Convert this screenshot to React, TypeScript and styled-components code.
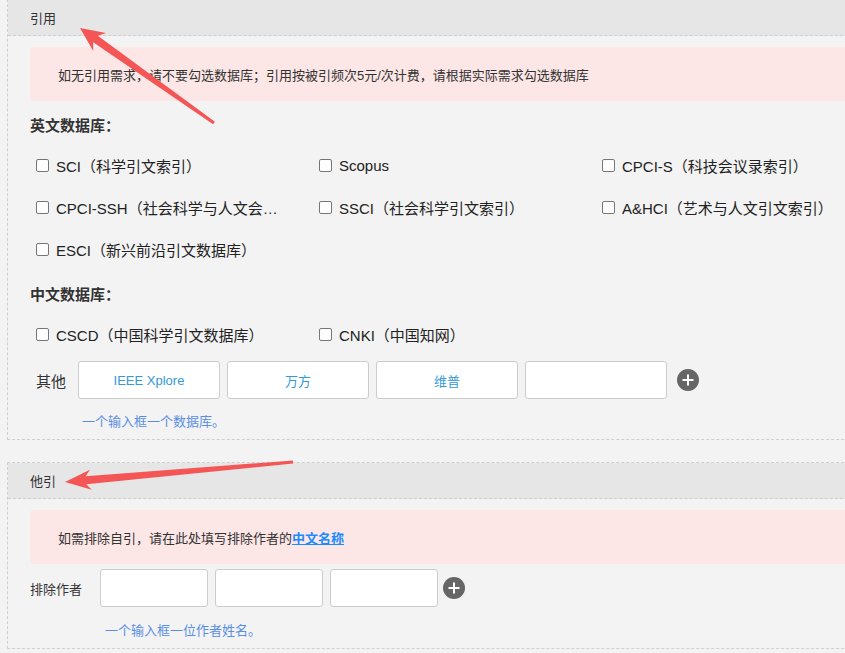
import React from 'react';
import { createGlobalStyle, styled } from 'styled-components';

const GlobalStyle = createGlobalStyle`
  html, body {
    margin: 0;
    padding: 0;
    background: #f3f3f3;
    overflow: hidden;
  }
  body {
    font-family: "Liberation Sans", "Noto Sans CJK SC", sans-serif;
    color: #333;
  }
`;

const Page = styled.div`
  position: relative;
  width: 845px;
  height: 653px;
  overflow: hidden;
`;

const Section = styled.section<{ $first?: boolean }>`
  margin: ${({ $first }) => ($first ? '-1px' : '22px')} 0 0 7px;
  width: 900px;
  border: 1px dashed #cfcfcf;
`;

const Header = styled.div`
  height: 36px;
  box-sizing: border-box;
  padding: 3px 0 0 22px;
  line-height: 32px;
  font-size: 13px;
  color: #333;
  background: #e6e6e6;
  border-bottom: 1px dashed #cfcfcf;
`;

const Body = styled.div`
  padding: 11px 0 8px 22px;
`;

const Notice = styled.div`
  display: flex;
  align-items: center;
  height: 54px;
  width: 860px;
  box-sizing: border-box;
  padding-left: 28px;
  border-radius: 4px;
  background: #fce6e6;
  font-size: 13px;
  color: #333;
`;

const NoticeLink = styled.a`
  color: #1a8cff;
  font-weight: bold;
  text-decoration: underline;
`;

const GroupTitle = styled.div`
  margin: 15px 0 8px;
  line-height: 20px;
  font-size: 15px;
  font-weight: bold;
  color: #333;
`;

const CheckGrid = styled.div`
  display: grid;
  grid-template-columns: repeat(3, 283px);
  grid-auto-rows: 42px;
`;

const CheckItem = styled.label`
  display: flex;
  align-items: center;
  min-width: 0;
  padding: 0 28px 0 6px;
  font-size: 15px;
  color: #222;
`;

const Box = styled.input`
  appearance: none;
  flex: none;
  width: 13px;
  height: 13px;
  margin: 0 7px 0 0;
  border: 1px solid #767676;
  border-radius: 2px;
  background: #fff;
  box-sizing: border-box;
`;

const CheckText = styled.span`
  white-space: nowrap;
  overflow: hidden;
  text-overflow: ellipsis;
`;

const InputRow = styled.div<{ $top: number }>`
  display: flex;
  align-items: center;
  margin-top: ${({ $top }) => $top}px;
`;

const RowLabel = styled.span<{ $width: number; $size: number; $indent: number }>`
  flex: none;
  box-sizing: border-box;
  width: ${({ $width }) => $width}px;
  padding-left: ${({ $indent }) => $indent}px;
  font-size: ${({ $size }) => $size}px;
  color: #333;
`;

const Inputs = styled.div`
  display: flex;
  gap: 7px;
`;

const TextBox = styled.input<{ $width: number }>`
  width: ${({ $width }) => $width}px;
  height: 38px;
  box-sizing: border-box;
  border: 1px solid #ccc;
  border-radius: 3px;
  background: #fff;
  text-align: center;
  font-family: inherit;
  font-size: 13px;
  color: #3499d4;
  outline: none;
`;

const AddButton = styled.span<{ $gap: number }>`
  display: inline-flex;
  align-items: center;
  justify-content: center;
  width: 22px;
  height: 22px;
  margin-left: ${({ $gap }) => $gap}px;
  border-radius: 50%;
  background: #666;
`;

const Hint = styled.div<{ $indent: number; $top: number }>`
  margin-top: ${({ $top }) => $top}px;
  padding-left: ${({ $indent }) => $indent}px;
  line-height: 18px;
  font-size: 13px;
  color: #5a8ee6;
`;

const Overlay = styled.svg`
  position: absolute;
  left: 0;
  top: 0;
  pointer-events: none;
`;

const englishDbs = [
  'SCI（科学引文索引）',
  'Scopus',
  'CPCI-S（科技会议录索引）',
  'CPCI-SSH（社会科学与人文会议录索引）',
  'SSCI（社会科学引文索引）',
  'A&HCI（艺术与人文引文索引）',
  'ESCI（新兴前沿引文数据库）',
];

const chineseDbs = ['CSCD（中国科学引文数据库）', 'CNKI（中国知网）'];

const PlusIcon = () => (
  <svg width="12" height="12" viewBox="0 0 12 12">
    <path d="M6 0.5v11M0.5 6h11" stroke="#fff" strokeWidth="2" />
  </svg>
);

const CheckList: React.FC<{ items: string[] }> = ({ items }) => (
  <CheckGrid>
    {items.map((item) => (
      <CheckItem key={item}>
        <Box type="checkbox" />
        <CheckText>{item}</CheckText>
      </CheckItem>
    ))}
  </CheckGrid>
);

export default function App() {
  return (
    <>
      <GlobalStyle />
      <Page>
        <Section $first>
          <Header>引用</Header>
          <Body>
            <Notice>如无引用需求，请不要勾选数据库；引用按被引频次5元/次计费，请根据实际需求勾选数据库</Notice>

            <GroupTitle>英文数据库：</GroupTitle>
            <CheckList items={englishDbs} />

            <GroupTitle>中文数据库：</GroupTitle>
            <CheckList items={chineseDbs} />

            <InputRow $top={6}>
              <RowLabel $width={48} $size={15} $indent={6}>
                其他
              </RowLabel>
              <Inputs>
                <TextBox $width={142} defaultValue="IEEE Xplore" />
                <TextBox $width={142} defaultValue="万方" />
                <TextBox $width={142} defaultValue="维普" />
                <TextBox $width={142} defaultValue="" />
              </Inputs>
              <AddButton $gap={10}>
                <PlusIcon />
              </AddButton>
            </InputRow>
            <Hint $indent={52} $top={14}>
              一个输入框一个数据库。
            </Hint>
          </Body>
        </Section>

        <Section>
          <Header>他引</Header>
          <Body>
            <Notice>
              如需排除自引，请在此处填写排除作者的<NoticeLink>中文名称</NoticeLink>
            </Notice>
            <InputRow $top={5}>
              <RowLabel $width={70} $size={13} $indent={0}>
                排除作者
              </RowLabel>
              <Inputs>
                <TextBox $width={108} defaultValue="" />
                <TextBox $width={108} defaultValue="" />
                <TextBox $width={108} defaultValue="" />
              </Inputs>
              <AddButton $gap={5}>
                <PlusIcon />
              </AddButton>
            </InputRow>
            <Hint $indent={75} $top={15}>
              一个输入框一位作者姓名。
            </Hint>
          </Body>
        </Section>

        <Overlay width="845" height="653" viewBox="0 0 845 653">
          <polygon
            fill="#f45555"
            points="80,28 93.2,50.9 93.2,42.3 213.1,124.2 214.9,121.8 97.8,35.7 106,32.9"
          />
          <polygon
            fill="#f45555"
            points="65,482 91.8,489.7 86.2,484.2 293.1,463.5 292.9,460.5 85.6,476.2 90,469.7"
          />
        </Overlay>
      </Page>
    </>
  );
}
